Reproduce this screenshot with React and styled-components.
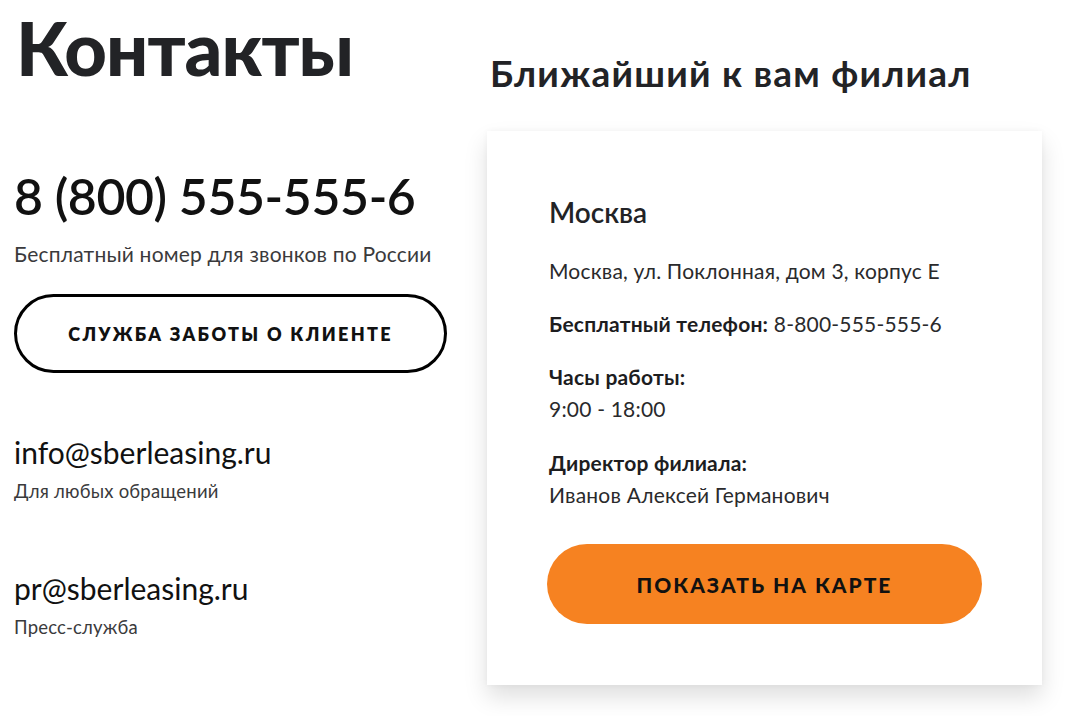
import React from "react";
import styled, { createGlobalStyle } from "styled-components";

const Global = createGlobalStyle`
  html, body { margin: 0; padding: 0; background: #fff; }
  body { font-family: Lato, "Noto Sans", sans-serif; color: #1d1d1f; }
  * { box-sizing: border-box; }
`;

const Page = styled.div`
  display: grid;
  grid-template-columns: 434px 555px;
  column-gap: 39px;
  align-items: start;
  padding: 0 0 0 14px;
  width: 1072px;
  height: 716px;
  overflow: hidden;
`;

const LeftCol = styled.div`
  display: flex;
  flex-direction: column;
  align-items: flex-start;
`;

const RightCol = styled.div`
  display: flex;
  flex-direction: column;
`;

const Title = styled.h1`
  margin: 3px 0 0 2px;
  font-size: 74px;
  line-height: 90px;
  font-weight: 900;
  letter-spacing: -1px;
  color: #222326;
`;

const Phone = styled.div`
  margin-top: 73px;
  font-size: 50px;
  line-height: 60px;
  font-weight: 600;
  letter-spacing: -0.4px;
  color: #111;
`;

const Note = styled.div`
  margin-top: ${(p) => p.$mt || 0}px;
  font-size: ${(p) => p.$size || 21}px;
  line-height: 1.3;
  letter-spacing: 0.2px;
  color: #3a3a3c;
`;

const OutlineButton = styled.button`
  margin-top: 27px;
  width: 433px;
  height: 79px;
  border: 3px solid #000;
  border-radius: 40px;
  background: #fff;
  font-family: inherit;
  font-size: 18px;
  font-weight: 800;
  letter-spacing: 2.3px;
  color: #111;
  cursor: pointer;
`;

const Email = styled.div`
  margin-top: ${(p) => p.$mt}px;
  font-size: 30px;
  line-height: 36px;
  font-weight: 400;
  color: #111;
`;

const SubTitle = styled.h2`
  margin: 51px 0 0 3px;
  font-size: 37px;
  line-height: 44px;
  font-weight: 700;
  letter-spacing: 1.2px;
  color: #222326;
`;

const Card = styled.div`
  margin-top: 36px;
  width: 555px;
  height: 554px;
  background: #fff;
  box-shadow: 0 12px 22px rgba(0, 0, 0, 0.13), 0 0 6px rgba(0, 0, 0, 0.04);
  padding: 64px 60px 0 62px;
  display: flex;
  flex-direction: column;
  align-items: flex-start;
`;

const City = styled.div`
  font-size: 28px;
  line-height: 34px;
  font-weight: 600;
  color: #222326;
`;

const Line = styled.div`
  margin-top: ${(p) => p.$mt || 0}px;
  font-size: 21px;
  line-height: 32px;
  letter-spacing: 0.2px;
  color: #2a2a2c;
`;

const Strong = styled.span`
  font-weight: 700;
  color: #1d1d1f;
`;

const OrangeButton = styled.button`
  margin: 33px 0 0 -2px;
  width: 435px;
  height: 80px;
  border: none;
  border-radius: 40px;
  background: #f68221;
  font-family: inherit;
  font-size: 21px;
  font-weight: 900;
  letter-spacing: 2px;
  color: #111;
  cursor: pointer;
`;

export default function App() {
  return (
    <>
      <Global />
      <Page>
        <LeftCol>
          <Title>Контакты</Title>
          <Phone>8 (800) 555-555-6</Phone>
          <Note $mt={14}>Бесплатный номер для звонков по России</Note>
          <OutlineButton>СЛУЖБА ЗАБОТЫ О КЛИЕНТЕ</OutlineButton>
          <Email $mt={61}>info@sberleasing.ru</Email>
          <Note $size={18.5} $mt={9}>Для любых обращений</Note>
          <Email $mt={67}>pr@sberleasing.ru</Email>
          <Note $size={18.5} $mt={9}>Пресс-служба</Note>
        </LeftCol>
        <RightCol>
          <SubTitle>Ближайший к вам филиал</SubTitle>
          <Card>
            <City>Москва</City>
            <Line $mt={26}>Москва, ул. Поклонная, дом 3, корпус Е</Line>
            <Line $mt={21}>
              <Strong>Бесплатный телефон:</Strong> 8-800-555-555-6
            </Line>
            <Line $mt={21}>
              <Strong>Часы работы:</Strong>
            </Line>
            <Line>9:00 - 18:00</Line>
            <Line $mt={22}>
              <Strong>Директор филиала:</Strong>
            </Line>
            <Line>Иванов Алексей Германович</Line>
            <OrangeButton>ПОКАЗАТЬ НА КАРТЕ</OrangeButton>
          </Card>
        </RightCol>
      </Page>
    </>
  );
}
